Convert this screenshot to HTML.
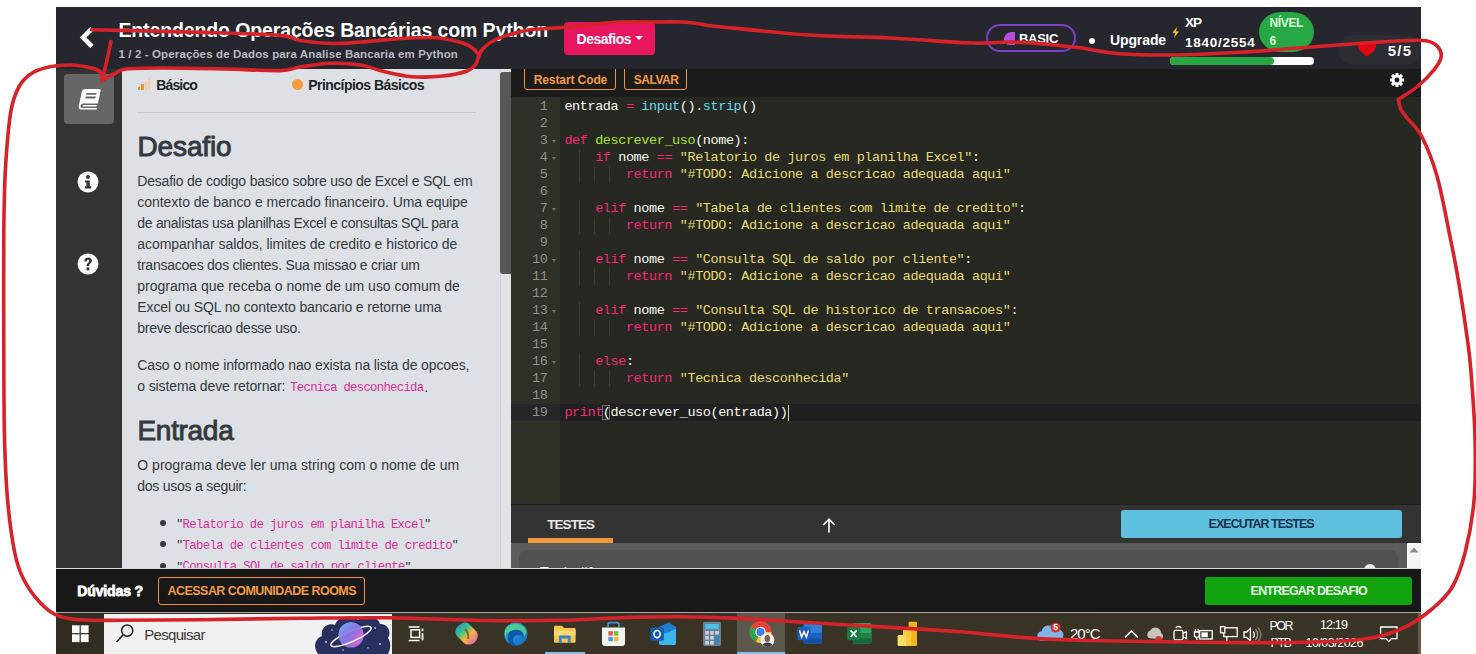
<!DOCTYPE html>
<html lang="pt-BR"><head><meta charset="utf-8"><title>Desafio</title>
<style>
html,body{margin:0;padding:0;background:#fff;}
body{width:1476px;height:654px;position:relative;overflow:hidden;font-family:"Liberation Sans",sans-serif;}
.a{position:absolute;}
.t{position:absolute;white-space:nowrap;margin:0;padding:0;}
.cl{position:absolute;left:564.4px;height:17px;line-height:17px;white-space:pre;font-family:"Liberation Mono",monospace;font-size:13.5px;letter-spacing:-0.412px;color:#f8f8f2;}
.ln{position:absolute;left:511px;width:36.4px;text-align:right;height:17px;line-height:17px;font-family:"Liberation Mono",monospace;font-size:13.5px;letter-spacing:-0.412px;color:#8f908a;}
.k{color:#f92672}.f{color:#66d9ef}.g{color:#a6e22e}.s{color:#e6db74}
</style></head><body>


<div class="a" style="left:56px;top:7px;width:1365px;height:62px;background:#26262e;"></div>
<div class="a" style="left:56px;top:69px;width:66px;height:499px;background:#333333;"></div>
<div class="a" style="left:64px;top:74px;width:50px;height:50px;border-radius:4px;background:#666666;"></div>
<div class="a" style="left:122px;top:69px;width:378px;height:499px;background:#dde0e4;"></div>
<div class="a" style="left:500px;top:69px;width:11px;height:499px;background:#e1e3e6;border-left:1px solid #d2d5d9;box-sizing:border-box;"></div>
<div class="a" style="left:500px;top:72px;width:11px;height:202px;background:#575757;border-radius:3px 0 0 3px;"></div>
<div class="a" style="left:137px;top:112px;width:339px;height:1px;background:#c6c9cd;"></div>
<div class="a" style="left:511px;top:69px;width:910px;height:28px;background:#1b1b1b;"></div>
<div class="a" style="left:511px;top:97px;width:910px;height:407px;background:#272822;"></div>
<div class="a" style="left:511px;top:97px;width:49px;height:407px;background:#2f3129;"></div>
<div class="a" style="left:511px;top:404px;width:910px;height:17px;background:#202020;"></div>
<div class="a" style="left:511px;top:404px;width:49px;height:17px;background:#272727;"></div>
<div class="a" style="left:511px;top:504px;width:910px;height:39px;background:#333333;border-top:1px solid #1f1f1d;box-sizing:border-box;"></div>
<div class="a" style="left:511px;top:543px;width:910px;height:25px;background:#5b5b5b;"></div>
<div class="a" style="left:519px;top:550px;width:879px;height:30px;background:#515151;border-radius:8px;"></div>
<div class="a" style="left:1407px;top:543px;width:14px;height:25px;background:#f4f4f4;"></div>
<div class="a" style="left:528px;top:538px;width:85px;height:5px;background:#f0983e;"></div>
<div class="a" style="left:1121px;top:510px;width:281px;height:28px;border-radius:3px;background:#60c0e0;"></div>
<div class="a" style="z-index:2;left:56px;top:568px;width:1365px;height:45px;background:#181818;border-top:1px solid #d8d8d8;box-sizing:border-box;"></div>
<div class="a" style="z-index:2;left:1205px;top:577px;width:207px;height:28px;border-radius:3px;background:#12a40f;"></div>
<div class="a" style="z-index:2;left:158px;top:577px;width:207px;height:28px;border-radius:3px;border:1px solid #f0913a;box-sizing:border-box;"></div>
<div class="a" style="z-index:2;left:56px;top:612px;width:1365px;height:42px;background:linear-gradient(90deg,#302c20 0,#393326 300px,#3a3427 100%);border-top:1px solid #a9a79f;box-sizing:border-box;"></div>
<div class="a" style="z-index:2;left:104px;top:614px;width:288px;height:40px;background:#f1f1f1;"></div>
<div class="a" style="z-index:2;left:737px;top:613px;width:48px;height:41px;background:#5c574b;"></div>
<div class="a" style="z-index:2;left:737px;top:652px;width:48px;height:2px;background:#84bdea;"></div>
<div class="a" style="z-index:2;left:545px;top:652px;width:40px;height:2px;background:#84bdea;"></div>
<div class="a" style="z-index:2;left:1418px;top:613px;width:3px;height:41px;background:#6a5a45;"></div>


<div class="a" style="left:564px;top:22px;width:91px;height:33px;border-radius:4px;background:#e8155f;"></div>
<div class="a" style="left:635px;top:36px;width:0;height:0;border-left:4.5px solid transparent;border-right:4.5px solid transparent;border-top:4.5px solid #fff;"></div>
<div class="a" style="left:985.5px;top:24px;width:90px;height:28px;border-radius:14px;border:2px solid #7d3fc4;box-sizing:border-box;"></div>
<div class="a" style="left:1004px;top:32px;width:11px;height:13px;background:#b44fe0;border-radius:11px 0 1px 8px;"></div>
<div class="a" style="left:1089px;top:38px;width:6px;height:6px;border-radius:3px;background:#fff;"></div>
<div class="a" style="left:1258.7px;top:11.5px;width:55.3px;height:40px;border-radius:22px/20px;background:#28a745;"></div>
<div class="a" style="left:1170px;top:57px;width:144px;height:8px;border-radius:4px;background:#fff;"></div>
<div class="a" style="left:1170px;top:57px;width:104px;height:8px;border-radius:4px;background:#28a745;"></div>
<div class="a" style="left:1338px;top:35px;width:83px;height:30px;border-radius:15px;background:#2c2c33;"></div>
<svg class="a" style="left:1354px;top:40px;" width="26" height="18" viewBox="0 0 26 18"><path d="M13 16.6 C9.4 13.6 3.8 10.2 3.8 5.8 C3.8 3 5.9 1.2 8.4 1.2 C10.4 1.2 12.2 2.3 13 3.9 C13.8 2.3 15.6 1.2 17.6 1.2 C20.1 1.2 22.2 3 22.2 5.8 C22.2 10.2 16.6 13.6 13 16.6 Z" fill="#e30613"/></svg>
<svg class="a" style="left:1170.5px;top:25.5px;" width="9.4" height="13" viewBox="0 0 13 18"><path d="M8.5 1 L2 9.5 L6 9.8 L4 16.5 L11 7.5 L7 7.2 Z" fill="#fbbf24"/></svg>
<svg class="a" style="left:76px;top:23px;" width="24" height="30" viewBox="0 0 24 30"><path d="M16 5.5 L7 14.5 L16 23.5" fill="none" stroke="#fff" stroke-width="4.6" stroke-linecap="butt" stroke-linejoin="miter"/></svg>


<svg class="a" style="left:76px;top:86px;" width="26" height="26" viewBox="0 0 26 26"><g transform="skewX(-12) translate(4,0)"><path d="M6 3 H20 a1.6 1.6 0 0 1 1.6 1.6 V17.5 H7 a2.2 2.2 0 0 0 0 4.4 H21.6 V23.5 H6.5 A3.6 3.6 0 0 1 3 19.9 V6 A3 3 0 0 1 6 3 Z" fill="#fff"/><rect x="8" y="7" width="10" height="1.8" fill="#666"/><rect x="8" y="10.6" width="10" height="1.8" fill="#666"/><rect x="7" y="19" width="14" height="1.6" fill="#fff"/></g></svg>
<svg class="a" style="left:77.4px;top:170.5px;" width="22" height="22" viewBox="0 0 21 21"><circle cx="10.5" cy="10.5" r="10" fill="#fff"/><circle cx="10.5" cy="5.8" r="1.9" fill="#333"/><path d="M7.6 9 H12.2 V14.6 H13.6 V16.6 H7.6 V14.6 H9 V11 H7.6 Z" fill="#333"/></svg>
<svg class="a" style="left:77.4px;top:252.6px;" width="22" height="22" viewBox="0 0 21 21"><circle cx="10.5" cy="10.5" r="10" fill="#fff"/><path d="M7 8 C7 5.5 8.6 4.4 10.6 4.4 C12.8 4.4 14.2 5.7 14.2 7.5 C14.2 9.8 11.6 10 11.6 12.3 H9.3 C9.3 9.4 11.7 9.2 11.7 7.6 C11.7 6.9 11.2 6.5 10.6 6.5 C9.8 6.5 9.4 7.1 9.4 8 Z" fill="#333"/><circle cx="10.45" cy="15.2" r="1.55" fill="#333"/></svg>


<div class="a" style="left:138.2px;top:86.5px;width:2.2px;height:3px;background:#f4922f;"></div>
<div class="a" style="left:141.4px;top:84px;width:2.2px;height:5.5px;background:#f4922f;"></div>
<div class="a" style="left:144.6px;top:81px;width:2.2px;height:8.5px;background:#f7cda3;"></div>
<div class="a" style="left:147.8px;top:78px;width:2.2px;height:11.5px;background:#f7cda3;"></div>
<div class="a" style="left:291.5px;top:78.5px;width:11px;height:11px;border-radius:6px;background:#fd9a3a;"></div>
<div class="a" style="left:159.6px;top:519.8px;width:6px;height:6px;border-radius:3px;background:#343a40;"></div>
<div class="a" style="left:159.6px;top:541.2px;width:6px;height:6px;border-radius:3px;background:#343a40;"></div>
<div class="a" style="left:159.6px;top:562.5px;width:6px;height:6px;border-radius:3px;background:#343a40;"></div>


<div class="a" style="left:524px;top:63.2px;width:92px;height:26.5px;border-radius:3px;border:1px solid #f0913a;box-sizing:border-box;"></div>
<div class="a" style="left:624px;top:63.2px;width:63px;height:26.5px;border-radius:3px;border:1px solid #f0913a;box-sizing:border-box;"></div>
<div class="a" style="left:511px;top:60px;width:200px;height:9px;background:#26262e;"></div>
<svg class="a" style="left:1389px;top:71.8px;" width="16" height="16" viewBox="0 0 16 16"><g fill="#fff"><circle cx="8" cy="8" r="5.4"/><rect x="6.5" y="0.9" width="3" height="14.2" rx="0.5"/><rect x="6.5" y="0.9" width="3" height="14.2" rx="0.5" transform="rotate(45 8 8)"/><rect x="6.5" y="0.9" width="3" height="14.2" rx="0.5" transform="rotate(90 8 8)"/><rect x="6.5" y="0.9" width="3" height="14.2" rx="0.5" transform="rotate(135 8 8)"/></g><circle cx="8" cy="8" r="2.4" fill="#1b1b1b"/></svg>
<svg class="a" style="left:821px;top:517px;" width="16" height="17" viewBox="0 0 16 17"><path d="M8 15.5 V2.5 M2.2 8 L8 2.2 L13.8 8" fill="none" stroke="#fff" stroke-width="1.6"/></svg>
<svg class="a" style="left:1409px;top:546px;" width="10" height="8" viewBox="0 0 10 8"><path d="M0.5 6.5 L5 1.5 L9.5 6.5 Z" fill="#8a8a8a"/></svg>
<div class="a" style="left:1364px;top:564px;width:12px;height:12px;border-radius:6px;background:#e8e8e8;"></div>

<div class="ln" style="top:98.3px">1</div>
<div class="cl" style="top:98.3px">entrada <span class="k">=</span> <span class="f">input</span>().<span class="f">strip</span>()</div>
<div class="ln" style="top:115.3px">2</div>
<div class="ln" style="top:132.3px">3</div>
<div class="a" style="left:551.5px;top:140.3px;width:0;height:0;border-left:2.6px solid transparent;border-right:2.6px solid transparent;border-top:3.4px solid #74756f;"></div>
<div class="cl" style="top:132.3px"><span class="k">def</span> <span class="g">descrever_uso</span>(nome):</div>
<div class="ln" style="top:149.3px">4</div>
<div class="a" style="left:551.5px;top:157.3px;width:0;height:0;border-left:2.6px solid transparent;border-right:2.6px solid transparent;border-top:3.4px solid #74756f;"></div>
<div class="cl" style="top:149.3px">    <span class="k">if</span> nome <span class="k">==</span> <span class="s">"Relatorio de juros em planilha Excel"</span>:</div>
<div class="ln" style="top:166.3px">5</div>
<div class="cl" style="top:166.3px">        <span class="k">return</span> <span class="s">"#TODO: Adicione a descricao adequada aqui"</span></div>
<div class="ln" style="top:183.3px">6</div>
<div class="ln" style="top:200.3px">7</div>
<div class="a" style="left:551.5px;top:208.3px;width:0;height:0;border-left:2.6px solid transparent;border-right:2.6px solid transparent;border-top:3.4px solid #74756f;"></div>
<div class="cl" style="top:200.3px">    <span class="k">elif</span> nome <span class="k">==</span> <span class="s">"Tabela de clientes com limite de credito"</span>:</div>
<div class="ln" style="top:217.3px">8</div>
<div class="cl" style="top:217.3px">        <span class="k">return</span> <span class="s">"#TODO: Adicione a descricao adequada aqui"</span></div>
<div class="ln" style="top:234.3px">9</div>
<div class="ln" style="top:251.3px">10</div>
<div class="a" style="left:551.5px;top:259.3px;width:0;height:0;border-left:2.6px solid transparent;border-right:2.6px solid transparent;border-top:3.4px solid #74756f;"></div>
<div class="cl" style="top:251.3px">    <span class="k">elif</span> nome <span class="k">==</span> <span class="s">"Consulta SQL de saldo por cliente"</span>:</div>
<div class="ln" style="top:268.3px">11</div>
<div class="cl" style="top:268.3px">        <span class="k">return</span> <span class="s">"#TODO: Adicione a descricao adequada aqui"</span></div>
<div class="ln" style="top:285.3px">12</div>
<div class="ln" style="top:302.3px">13</div>
<div class="a" style="left:551.5px;top:310.3px;width:0;height:0;border-left:2.6px solid transparent;border-right:2.6px solid transparent;border-top:3.4px solid #74756f;"></div>
<div class="cl" style="top:302.3px">    <span class="k">elif</span> nome <span class="k">==</span> <span class="s">"Consulta SQL de historico de transacoes"</span>:</div>
<div class="ln" style="top:319.3px">14</div>
<div class="cl" style="top:319.3px">        <span class="k">return</span> <span class="s">"#TODO: Adicione a descricao adequada aqui"</span></div>
<div class="ln" style="top:336.3px">15</div>
<div class="ln" style="top:353.3px">16</div>
<div class="a" style="left:551.5px;top:361.3px;width:0;height:0;border-left:2.6px solid transparent;border-right:2.6px solid transparent;border-top:3.4px solid #74756f;"></div>
<div class="cl" style="top:353.3px">    <span class="k">else</span>:</div>
<div class="ln" style="top:370.3px">17</div>
<div class="cl" style="top:370.3px">        <span class="k">return</span> <span class="s">"Tecnica desconhecida"</span></div>
<div class="ln" style="top:387.3px">18</div>
<div class="ln" style="top:404.3px">19</div>
<div class="cl" style="top:404.3px"><span class="k">print</span>(descrever_uso(entrada))</div>
<div class="a" style="left:578.6px;top:148.8px;width:1px;height:17px;background:#3b3a32;"></div>
<div class="a" style="left:578.6px;top:199.8px;width:1px;height:17px;background:#3b3a32;"></div>
<div class="a" style="left:578.6px;top:250.8px;width:1px;height:17px;background:#3b3a32;"></div>
<div class="a" style="left:578.6px;top:301.8px;width:1px;height:17px;background:#3b3a32;"></div>
<div class="a" style="left:578.6px;top:352.8px;width:1px;height:17px;background:#3b3a32;"></div>
<div class="a" style="left:578.6px;top:165.8px;width:1px;height:17px;background:#3b3a32;"></div>
<div class="a" style="left:594.0px;top:165.8px;width:1px;height:17px;background:#3b3a32;"></div>
<div class="a" style="left:609.4px;top:165.8px;width:1px;height:17px;background:#3b3a32;"></div>
<div class="a" style="left:578.6px;top:216.8px;width:1px;height:17px;background:#3b3a32;"></div>
<div class="a" style="left:594.0px;top:216.8px;width:1px;height:17px;background:#3b3a32;"></div>
<div class="a" style="left:609.4px;top:216.8px;width:1px;height:17px;background:#3b3a32;"></div>
<div class="a" style="left:578.6px;top:267.8px;width:1px;height:17px;background:#3b3a32;"></div>
<div class="a" style="left:594.0px;top:267.8px;width:1px;height:17px;background:#3b3a32;"></div>
<div class="a" style="left:609.4px;top:267.8px;width:1px;height:17px;background:#3b3a32;"></div>
<div class="a" style="left:578.6px;top:318.8px;width:1px;height:17px;background:#3b3a32;"></div>
<div class="a" style="left:594.0px;top:318.8px;width:1px;height:17px;background:#3b3a32;"></div>
<div class="a" style="left:609.4px;top:318.8px;width:1px;height:17px;background:#3b3a32;"></div>
<div class="a" style="left:578.6px;top:369.8px;width:1px;height:17px;background:#3b3a32;"></div>
<div class="a" style="left:594.0px;top:369.8px;width:1px;height:17px;background:#3b3a32;"></div>
<div class="a" style="left:609.4px;top:369.8px;width:1px;height:17px;background:#3b3a32;"></div>
<div class="a" style="left:787.5px;top:405px;width:1px;height:16px;background:#d0d0c8;"></div>
<div class="a" style="left:602px;top:405px;width:8px;height:15px;border:1px solid #6b6b63;box-sizing:border-box;"></div>
<div class="t" id="title" style="left:118.4px;top:16.8px;height:27px;line-height:27px;font-size:19.5px;font-weight:700;color:#fff;font-family:'Liberation Sans', sans-serif;letter-spacing:-0.121px;">Entendendo Operações Bancárias com Python</div>
<div class="t" id="sub" style="left:118.4px;top:46.0px;height:16px;line-height:16px;font-size:11.5px;font-weight:700;color:#b9b9c0;font-family:'Liberation Sans', sans-serif;letter-spacing:0.132px;">1 / 2 - Operações de Dados para Analise Bancaria em Python</div>
<div class="t" id="desaf" style="left:576.6px;top:29.0px;height:20px;line-height:20px;font-size:14px;font-weight:700;color:#fff;font-family:'Liberation Sans', sans-serif;letter-spacing:-0.495px;">Desafios</div>
<div class="t" id="basic" style="left:1019.0px;top:29.5px;height:18px;line-height:18px;font-size:13px;font-weight:700;color:#fff;font-family:'Liberation Sans', sans-serif;letter-spacing:-0.291px;">BASIC</div>
<div class="t" id="upg" style="left:1110.0px;top:29.5px;height:20px;line-height:20px;font-size:14px;font-weight:700;color:#fff;font-family:'Liberation Sans', sans-serif;letter-spacing:-0.114px;">Upgrade</div>
<div class="t" id="xp" style="left:1185.0px;top:12.8px;height:19px;line-height:19px;font-size:13.5px;font-weight:700;color:#fff;font-family:'Liberation Sans', sans-serif;letter-spacing:-1.008px;">XP</div>
<div class="t" id="xpv" style="left:1185.0px;top:33.3px;height:19px;line-height:19px;font-size:13.5px;font-weight:700;color:#fff;font-family:'Liberation Sans', sans-serif;letter-spacing:0.730px;">1840/2554</div>
<div class="t" id="nivel" style="left:1269.5px;top:14.5px;height:17px;line-height:17px;font-size:12px;font-weight:700;color:#d9ffd9;font-family:'Liberation Sans', sans-serif;letter-spacing:-0.369px;">NÍVEL</div>
<div class="t" id="n6" style="left:1269.5px;top:32.8px;height:17px;line-height:17px;font-size:12px;font-weight:700;color:#d9ffd9;font-family:'Liberation Sans', sans-serif;">6</div>
<div class="t" id="h55" style="left:1387.7px;top:39.5px;height:21px;line-height:21px;font-size:15px;font-weight:700;color:#fff;font-family:'Liberation Sans', sans-serif;letter-spacing:1.247px;">5/5</div>
<div class="t" id="basico" style="left:156.3px;top:75.0px;height:20px;line-height:20px;font-size:14px;font-weight:700;color:#212529;font-family:'Liberation Sans', sans-serif;letter-spacing:-0.870px;">Básico</div>
<div class="t" id="princ" style="left:308.2px;top:74.5px;height:20px;line-height:20px;font-size:14px;font-weight:700;color:#212529;font-family:'Liberation Sans', sans-serif;letter-spacing:-0.527px;">Princípios Básicos</div>
<div class="t" id="h1" style="left:137.5px;top:127.0px;height:39px;line-height:39px;font-size:28px;font-weight:400;color:#343a40;font-family:'Liberation Sans', sans-serif;-webkit-text-stroke:0.95px #343a40;letter-spacing:-0.134px;">Desafio</div>
<div class="t" id="p0" style="left:137.3px;top:171.0px;height:20px;line-height:20px;font-size:14px;font-weight:400;color:#343a40;font-family:'Liberation Sans', sans-serif;letter-spacing:-0.202px;">Desafio de codigo basico sobre uso de Excel e SQL em</div>
<div class="t" id="p1" style="left:137.3px;top:192.0px;height:20px;line-height:20px;font-size:14px;font-weight:400;color:#343a40;font-family:'Liberation Sans', sans-serif;letter-spacing:-0.037px;">contexto de banco e mercado financeiro. Uma equipe</div>
<div class="t" id="p2" style="left:137.3px;top:213.0px;height:20px;line-height:20px;font-size:14px;font-weight:400;color:#343a40;font-family:'Liberation Sans', sans-serif;letter-spacing:-0.294px;">de analistas usa planilhas Excel e consultas SQL para</div>
<div class="t" id="p3" style="left:137.3px;top:234.0px;height:20px;line-height:20px;font-size:14px;font-weight:400;color:#343a40;font-family:'Liberation Sans', sans-serif;letter-spacing:-0.042px;">acompanhar saldos, limites de credito e historico de</div>
<div class="t" id="p4" style="left:137.3px;top:255.0px;height:20px;line-height:20px;font-size:14px;font-weight:400;color:#343a40;font-family:'Liberation Sans', sans-serif;letter-spacing:-0.238px;">transacoes dos clientes. Sua missao e criar um</div>
<div class="t" id="p5" style="left:137.3px;top:276.0px;height:20px;line-height:20px;font-size:14px;font-weight:400;color:#343a40;font-family:'Liberation Sans', sans-serif;letter-spacing:-0.010px;">programa que receba o nome de um uso comum de</div>
<div class="t" id="p6" style="left:137.3px;top:297.0px;height:20px;line-height:20px;font-size:14px;font-weight:400;color:#343a40;font-family:'Liberation Sans', sans-serif;letter-spacing:-0.126px;">Excel ou SQL no contexto bancario e retorne uma</div>
<div class="t" id="p7" style="left:137.3px;top:318.0px;height:20px;line-height:20px;font-size:14px;font-weight:400;color:#343a40;font-family:'Liberation Sans', sans-serif;letter-spacing:-0.275px;">breve descricao desse uso.</div>
<div class="t" id="p8" style="left:137.3px;top:355.0px;height:20px;line-height:20px;font-size:14px;font-weight:400;color:#343a40;font-family:'Liberation Sans', sans-serif;letter-spacing:-0.109px;">Caso o nome informado nao exista na lista de opcoes,</div>
<div class="t" id="p9" style="left:137.3px;top:376.0px;height:20px;line-height:20px;font-size:14px;font-weight:400;color:#343a40;font-family:'Liberation Sans', sans-serif;letter-spacing:-0.124px;">o sistema deve retornar:</div>
<div class="t" id="p10" style="left:137.3px;top:455.0px;height:20px;line-height:20px;font-size:14px;font-weight:400;color:#343a40;font-family:'Liberation Sans', sans-serif;letter-spacing:0.011px;">O programa deve ler uma string com o nome de um</div>
<div class="t" id="p11" style="left:137.3px;top:476.0px;height:20px;line-height:20px;font-size:14px;font-weight:400;color:#343a40;font-family:'Liberation Sans', sans-serif;letter-spacing:-0.251px;">dos usos a seguir:</div>
<div class="t" id="h2" style="left:137.5px;top:410.5px;height:39px;line-height:39px;font-size:28px;font-weight:400;color:#343a40;font-family:'Liberation Sans', sans-serif;-webkit-text-stroke:0.95px #343a40;letter-spacing:-0.311px;">Entrada</div>
<div class="t" id="c0" style="left:290.2px;top:379.5px;height:17px;line-height:17px;font-size:12.25px;font-weight:400;color:#db2d9c;font-family:'Liberation Mono', monospace;letter-spacing:-0.692px;">Tecnica desconhecida</div>
<div class="t" id="c0d" style="left:424.2px;top:376.5px;height:20px;line-height:20px;font-size:14px;font-weight:400;color:#343a40;font-family:'Liberation Sans', sans-serif;">.</div>
<div class="t" id="bq0a" style="left:177.2px;top:513.9px;height:20px;line-height:20px;font-size:14px;font-weight:400;color:#343a40;font-family:'Liberation Sans', sans-serif;">"</div>
<div class="t" id="b0" style="left:182.6px;top:516.7px;height:17px;line-height:17px;font-size:12.25px;font-weight:400;color:#db2d9c;font-family:'Liberation Mono', monospace;letter-spacing:-0.632px;">Relatorio de juros em planilha Excel</div>
<div class="t" id="bq0b" style="left:425.3px;top:513.9px;height:20px;line-height:20px;font-size:14px;font-weight:400;color:#343a40;font-family:'Liberation Sans', sans-serif;">"</div>
<div class="t" id="bq1a" style="left:177.2px;top:535.3px;height:20px;line-height:20px;font-size:14px;font-weight:400;color:#343a40;font-family:'Liberation Sans', sans-serif;">"</div>
<div class="t" id="b1" style="left:182.6px;top:538.1px;height:17px;line-height:17px;font-size:12.25px;font-weight:400;color:#db2d9c;font-family:'Liberation Mono', monospace;letter-spacing:-0.619px;">Tabela de clientes com limite de credito</div>
<div class="t" id="bq1b" style="left:452.7px;top:535.3px;height:20px;line-height:20px;font-size:14px;font-weight:400;color:#343a40;font-family:'Liberation Sans', sans-serif;">"</div>
<div class="t" id="bq2a" style="left:177.2px;top:556.6px;height:20px;line-height:20px;font-size:14px;font-weight:400;color:#343a40;font-family:'Liberation Sans', sans-serif;">"</div>
<div class="t" id="b2" style="left:182.6px;top:559.4px;height:17px;line-height:17px;font-size:12.25px;font-weight:400;color:#db2d9c;font-family:'Liberation Mono', monospace;letter-spacing:-0.621px;">Consulta SQL de saldo por cliente</div>
<div class="t" id="bq2b" style="left:405.5px;top:556.6px;height:20px;line-height:20px;font-size:14px;font-weight:400;color:#343a40;font-family:'Liberation Sans', sans-serif;">"</div>
<div class="t" id="rc" style="left:533.7px;top:71.5px;height:17px;line-height:17px;font-size:12px;font-weight:700;color:#f39b42;font-family:'Liberation Sans', sans-serif;letter-spacing:-0.099px;">Restart Code</div>
<div class="t" id="sv" style="left:633.8px;top:71.5px;height:17px;line-height:17px;font-size:12px;font-weight:700;color:#f39b42;font-family:'Liberation Sans', sans-serif;letter-spacing:-0.477px;">SALVAR</div>
<div class="t" id="tst" style="left:547.3px;top:515.3px;height:19px;line-height:19px;font-size:13.5px;font-weight:700;color:#e6e6e6;font-family:'Liberation Sans', sans-serif;letter-spacing:-0.969px;">TESTES</div>
<div class="t" id="ext" style="left:1208.6px;top:515.2px;height:18px;line-height:18px;font-size:12.5px;font-weight:700;color:#17324d;font-family:'Liberation Sans', sans-serif;letter-spacing:-0.988px;">EXECUTAR TESTES</div>
<div class="t" id="ent" style="left:1250.6px;top:582.3px;height:18px;line-height:18px;font-size:12.5px;font-weight:700;color:#e9ffe9;font-family:'Liberation Sans', sans-serif;z-index:3;letter-spacing:-0.805px;">ENTREGAR DESAFIO</div>
<div class="t" id="duv" style="left:77.3px;top:581.0px;height:20px;line-height:20px;font-size:14px;font-weight:700;color:#fff;font-family:'Liberation Sans', sans-serif;-webkit-text-stroke:0.8px #fff;z-index:3;letter-spacing:-0.134px;">Dúvidas ?</div>
<div class="t" id="acr" style="left:167.5px;top:582.3px;height:18px;line-height:18px;font-size:12.5px;font-weight:700;color:#f39b42;font-family:'Liberation Sans', sans-serif;z-index:3;letter-spacing:-0.538px;">ACESSAR COMUNIDADE ROOMS</div>
<div class="t" id="tst1" style="left:540.0px;top:562.4px;height:20px;line-height:20px;font-size:14px;font-weight:700;color:#f0f0f0;font-family:'Liberation Sans', sans-serif;">Teste #1</div>
<div class="t" id="pesq" style="left:144.3px;top:623.8px;height:21px;line-height:21px;font-size:15px;font-weight:400;color:#3a3a3a;font-family:'Liberation Sans', sans-serif;z-index:3;letter-spacing:-0.700px;">Pesquisar</div>
<div class="t" id="temp" style="left:1070.0px;top:623.3px;height:21px;line-height:21px;font-size:15px;font-weight:400;color:#fff;font-family:'Liberation Sans', sans-serif;z-index:3;letter-spacing:-1.004px;">20°C</div>
<div class="t" id="por" style="left:1269.5px;top:616.5px;height:18px;line-height:18px;font-size:12.5px;font-weight:400;color:#fff;font-family:'Liberation Sans', sans-serif;z-index:3;letter-spacing:-1.531px;">POR</div>
<div class="t" id="ptb" style="left:1270.5px;top:633.8px;height:18px;line-height:18px;font-size:12.5px;font-weight:400;color:#fff;font-family:'Liberation Sans', sans-serif;z-index:3;letter-spacing:-1.438px;">PTB</div>
<div class="t" id="clk" style="left:1320.0px;top:615.6px;height:18px;line-height:18px;font-size:12.5px;font-weight:400;color:#fff;font-family:'Liberation Sans', sans-serif;z-index:3;letter-spacing:-0.856px;">12:19</div>
<div class="t" id="dat" style="left:1305.5px;top:633.8px;height:18px;line-height:18px;font-size:12.5px;font-weight:400;color:#fff;font-family:'Liberation Sans', sans-serif;z-index:3;letter-spacing:-0.506px;">10/03/2026</div>
<!-- taskbar icons -->
<svg class="a" style="left:56px;top:613px;z-index:3;" width="1365" height="41" viewBox="56 613 1365 41">
<defs>
<linearGradient id="gpl" x1="0" y1="0" x2="1" y2="1"><stop offset="0" stop-color="#6fb6f5"/><stop offset="0.55" stop-color="#8a6fe0"/><stop offset="1" stop-color="#e86bd0"/></linearGradient>
<linearGradient id="gco" x1="0" y1="0" x2="1" y2="1"><stop offset="0" stop-color="#2f7fe8"/><stop offset="0.35" stop-color="#35c28a"/><stop offset="0.6" stop-color="#f5b63c"/><stop offset="1" stop-color="#d84fd0"/></linearGradient>
<linearGradient id="ged" x1="0" y1="0" x2="1" y2="1"><stop offset="0" stop-color="#2bc3a0"/><stop offset="0.5" stop-color="#1f8fd8"/><stop offset="1" stop-color="#1565b8"/></linearGradient>
</defs>
<!-- windows logo -->
<g fill="#fff"><rect x="72" y="625.3" width="7.6" height="7.8"/><rect x="80.8" y="625.3" width="7.8" height="7.8"/><rect x="72" y="634.3" width="7.6" height="7.8"/><rect x="80.8" y="634.3" width="7.8" height="7.8"/></g>
<!-- search icon -->
<circle cx="127.2" cy="630.6" r="5.6" fill="none" stroke="#222" stroke-width="1.5"/><path d="M123.2 634.8 L116.6 642" stroke="#222" stroke-width="1.6" fill="none"/>
<!-- planet -->
<path d="M318 654 C312 646 316 638 322 636 C320 628 328 622 335 625 C338 616 352 614 358 620 C364 614 378 616 380 624 C388 624 392 632 388 638 C392 644 390 650 388 654 Z" fill="#27305f"/>
<circle cx="351" cy="635" r="12.6" fill="url(#gpl)"/>
<ellipse cx="351" cy="636.5" rx="22" ry="5.2" fill="none" stroke="#f3eefc" stroke-width="1.6" transform="rotate(-24 351 636.5)"/>
<path d="M339 631 A12.6 12.6 0 0 1 363 631 L363 636 L339 640 Z" fill="url(#gpl)" opacity="0.9"/>
<g fill="#cfd6f5"><circle cx="326" cy="642" r="0.9"/><circle cx="332" cy="630" r="0.8"/><circle cx="375" cy="628" r="0.9"/><circle cx="380" cy="644" r="0.9"/><circle cx="368" cy="648" r="0.8"/><circle cx="343" cy="650" r="0.8"/></g>
<!-- task view -->
<g fill="none" stroke="#fff" stroke-width="1.5"><rect x="411" y="629.8" width="8.6" height="7.6"/><path d="M408.6 627 H419.5 M408.6 640.4 H419.5"/></g><rect x="421.6" y="628.6" width="1.8" height="2.6" fill="#fff"/><rect x="421.6" y="633" width="1.8" height="7.4" fill="#fff"/>
<!-- copilot -->
<path d="M461 624 C463 622 467 622 469 624 L476 631 C479 634 478 640 474 643 C471 645 466 645 464 643 L457 636 C454 633 455 627 461 624 Z" fill="url(#gco)"/>
<path d="M465 629 C467 631 469 635 468 639" stroke="#3a3226" stroke-width="2" fill="none" opacity="0.55"/>
<!-- edge -->
<circle cx="515.8" cy="634" r="11.6" fill="url(#ged)"/>
<path d="M508 640 C506 633 512 628 518 629 C523 630 525 634 523 637 C520 634 514 634 513 639 C512.6 643 516 646 520 645 C514 647 509 645 508 640 Z" fill="#0f58a8"/>
<path d="M505 630 C509 623 520 622 525 628 C527 631 527 634 524 636 C524 631 517 628 511 631 C508 632 506 634 505 637 Z" fill="#4fd08f" opacity="0.9"/>
<!-- explorer -->
<path d="M554 627 a1.2 1.2 0 0 1 1.2 -1.2 H562 l2 2.2 H574.4 a1.2 1.2 0 0 1 1.2 1.2 V641.5 a1.2 1.2 0 0 1 -1.2 1.2 H555.2 a1.2 1.2 0 0 1 -1.2 -1.2 Z" fill="#f5c84a"/>
<rect x="554" y="630.5" width="21.6" height="5" fill="#fbe08a" opacity="0.7"/>
<path d="M559 642.7 V636.5 a1 1 0 0 1 1 -1 H569.6 a1 1 0 0 1 1 1 V642.7 H567.8 V638.4 H561.8 V642.7 Z" fill="#3b83c9"/>
<!-- store -->
<path d="M608 627 V624.6 a2 2 0 0 1 2 -2 H617 a2 2 0 0 1 2 2 V627" fill="none" stroke="#3f93d6" stroke-width="1.8"/>
<path d="M602 627.4 H625 V643 a3 3 0 0 1 -3 3 H605 a3 3 0 0 1 -3 -3 Z" fill="#f3f3f3"/>
<rect x="608.4" y="631.2" width="4.4" height="4.4" fill="#f0553f"/><rect x="614" y="631.2" width="4.4" height="4.4" fill="#7cbb3f"/><rect x="608.4" y="636.8" width="4.4" height="4.4" fill="#3f9fe0"/><rect x="614" y="636.8" width="4.4" height="4.4" fill="#f7b82f"/>
<!-- outlook -->
<path d="M659 627 L668.5 622.6 L676 627 V643 a2 2 0 0 1 -2 2 H661 a2 2 0 0 1 -2 -2 Z" fill="#1f7bd4"/>
<path d="M659 636 L676 629 V643 a2 2 0 0 1 -2 2 H661 a2 2 0 0 1 -2 -2 Z" fill="#3cb4ee"/>
<rect x="650.4" y="627.4" width="13.4" height="13.4" rx="1.6" fill="#0f5fb6"/>
<ellipse cx="657.1" cy="634.1" rx="3.1" ry="3.6" fill="none" stroke="#fff" stroke-width="1.7"/>
<!-- calculator -->
<rect x="703" y="621.8" width="18" height="24.2" rx="1.8" fill="#6e7f92"/>
<rect x="705.2" y="624" width="13.6" height="5" fill="#49c0e8"/>
<g fill="#c9d2dc"><rect x="705.2" y="631" width="3.6" height="3.6"/><rect x="710.2" y="631" width="3.6" height="3.6"/><rect x="715.2" y="631" width="3.6" height="3.6"/><rect x="705.2" y="636" width="3.6" height="3.6"/><rect x="710.2" y="636" width="3.6" height="3.6"/><rect x="705.2" y="641" width="3.6" height="3.6"/><rect x="710.2" y="641" width="3.6" height="3.6"/></g>
<rect x="715.2" y="636" width="3.6" height="8.6" fill="#2f87d0"/>
<!-- chrome -->
<circle cx="760.5" cy="632" r="11" fill="#e4433a"/>
<path d="M760.5 632 L751 626.5 A11 11 0 0 0 756 642 Z" fill="#2fa350"/>
<path d="M760.5 632 L756 642 A11 11 0 0 0 771.5 632 Z" fill="#f7c22f"/>
<circle cx="760.5" cy="632" r="5.2" fill="#fff"/><circle cx="760.5" cy="632" r="4.1" fill="#3f7fe6"/>
<circle cx="767.4" cy="640" r="7" fill="#f1f1f1"/>
<ellipse cx="767.4" cy="638.6" rx="2.8" ry="3.5" fill="#8a5f45"/>
<path d="M762.6 645 C763 641.6 771.8 641.6 772.2 645 A7 7 0 0 1 762.6 645 Z" fill="#39404d"/>
<!-- word -->
<rect x="803.5" y="623" width="18.5" height="20.6" rx="1.6" fill="#2f7fd8"/>
<rect x="803.5" y="633" width="18.5" height="5.4" fill="#1f62bd"/><rect x="803.5" y="638.2" width="18.5" height="5.4" rx="1.6" fill="#164fa3"/>
<rect x="797.4" y="627" width="13.2" height="13.2" rx="1.4" fill="#1b5cbe"/>
<path d="M799.6 630.4 L801.6 637 L804 631.6 L806.4 637 L808.4 630.4" fill="none" stroke="#fff" stroke-width="1.5"/>
<!-- excel -->
<rect x="853" y="623" width="18.5" height="20.6" rx="1.6" fill="#2fa060"/>
<rect x="853" y="633" width="18.5" height="5.4" fill="#1f8049"/><rect x="853" y="638.2" width="18.5" height="5.4" rx="1.6" fill="#17693b"/>
<rect x="847" y="627" width="13.2" height="13.2" rx="1.4" fill="#167a41"/>
<path d="M850.6 630.4 L856.6 637 M856.6 630.4 L850.6 637" fill="none" stroke="#fff" stroke-width="1.7"/>
<!-- power bi -->
<rect x="908.6" y="621.8" width="8.4" height="24.2" rx="1.2" fill="#f0b51f"/>
<rect x="903" y="628.6" width="8.4" height="17.4" rx="1.2" fill="#f5c93c"/>
<rect x="897.6" y="635" width="8.4" height="11" rx="1.2" fill="#f9dc6a"/>
<!-- weather -->
<path d="M1041 641 a5 5 0 0 1 0.6 -9.8 a7.2 7.2 0 0 1 13.6 -1.6 a5.8 5.8 0 0 1 4.4 11.4 Z" fill="#7fb5ea"/>
<circle cx="1055.6" cy="627.6" r="5" fill="#d9332b"/>
<!-- chevron up -->
<path d="M1125 637.4 L1131.4 631 L1137.8 637.4" fill="none" stroke="#fff" stroke-width="1.5"/>
<!-- tray: onedrive-ish -->
<path d="M1148.6 638 a4.6 4.6 0 0 1 1.6 -7.6 a6 6 0 0 1 11 2.6 a3.6 3.6 0 0 1 -0.6 6.6 Z" fill="#c9c4bb"/>
<circle cx="1158.6" cy="639.2" r="3.2" fill="#d9332b"/>
<!-- meet now -->
<g fill="none" stroke="#fff" stroke-width="1.3"><rect x="1174" y="630.4" width="9" height="9.4" rx="1.6"/><path d="M1183 633.4 L1186.4 631.6 V638.6 L1183 636.8"/><path d="M1175.6 628 C1177 626 1180 626 1181.4 628"/></g>
<!-- battery/plug -->
<g fill="none" stroke="#fff" stroke-width="1.3"><rect x="1199.6" y="630.6" width="12.6" height="8.4"/><path d="M1195.4 629 V632 M1198.2 629 V632 M1194.4 632 H1199.2 V635 a2.2 2.2 0 0 1 -4.8 0 Z M1196.8 637.4 V640"/></g><rect x="1201.4" y="632.4" width="6.4" height="4.8" fill="#fff"/>
<!-- network -->
<g fill="none" stroke="#fff" stroke-width="1.3"><rect x="1223.8" y="627.8" width="13.4" height="8.8"/><path d="M1222 641.6 H1231.6 M1226.8 636.6 V641.6"/><rect x="1220.6" y="626.6" width="4.2" height="6.2" fill="#393326"/></g>
<!-- speaker -->
<g fill="none" stroke="#fff" stroke-width="1.3"><path d="M1244 632 H1246.6 L1250.4 628.4 V641 L1246.6 637.4 H1244 Z"/><path d="M1253 631.6 a4.2 4.2 0 0 1 0 6.2" /><path d="M1255.4 629.4 a7.4 7.4 0 0 1 0 10.6" opacity="0.55"/><path d="M1257.8 627.4 a10.4 10.4 0 0 1 0 14.6" opacity="0.35"/></g>
<!-- notification -->
<path d="M1380.6 627 H1397 V638.6 H1391.4 L1388.8 641.6 L1386.2 638.6 H1380.6 Z" fill="none" stroke="#fff" stroke-width="1.3"/>
</svg>
<div class="t" style="left:1053.3px;top:622px;height:11px;line-height:11px;font-size:8.5px;font-weight:700;color:#fff;z-index:4;">5</div>

<svg class="a" style="left:0;top:0;z-index:9;" width="1476" height="654" viewBox="0 0 1476 654">
<path d="M102.7 80.0 C102.2 78.6 101.5 73.5 99.6 71.5 C97.7 69.5 96.3 69.1 91.5 68.0 C86.7 66.9 77.8 65.2 71.0 65.0 C64.2 64.8 57.3 65.2 51.0 66.5 C44.7 67.8 38.3 69.2 33.0 72.5 C27.7 75.8 23.1 79.5 19.4 86.0 C15.7 92.5 13.1 98.1 10.8 111.7 C8.5 125.3 6.7 147.8 5.5 167.8 C4.3 187.9 4.1 203.0 3.8 232.0 C3.5 261.0 3.7 307.7 3.8 342.0 C3.9 376.3 3.8 411.1 4.5 437.8 C5.2 464.5 6.0 483.0 7.8 502.4 C9.6 521.8 12.3 541.1 15.0 554.0 C17.7 566.9 19.8 571.9 24.0 580.0 C28.2 588.1 34.5 596.6 40.0 602.5 C45.5 608.4 50.2 612.4 57.0 615.3 C63.8 618.2 70.2 619.0 81.0 619.8 C91.8 620.6 102.2 620.3 122.0 620.3 C141.8 620.3 170.3 620.0 200.0 619.7 C229.7 619.4 268.3 618.6 300.0 618.3 C331.7 618.0 358.7 617.4 390.0 617.8 C421.3 618.2 459.7 620.1 488.0 620.5 C516.3 620.9 538.0 620.8 560.0 620.3 C582.0 619.8 600.0 618.4 620.0 617.8 C640.0 617.2 660.0 616.7 680.0 616.8 C700.0 616.9 720.8 617.6 740.0 618.4 C759.2 619.2 770.0 620.2 795.0 621.7 C820.0 623.2 862.5 625.7 890.0 627.4 C917.5 629.1 937.7 630.1 960.0 631.8 C982.3 633.5 1002.5 636.1 1023.7 637.6 C1044.9 639.1 1060.5 639.8 1087.0 640.5 C1113.5 641.2 1151.2 641.6 1183.0 642.0 C1214.8 642.4 1251.5 642.8 1278.0 642.6 C1304.5 642.4 1326.0 641.8 1342.0 641.0 C1358.0 640.2 1363.3 640.0 1374.0 637.6 C1384.7 635.2 1396.3 631.4 1406.0 626.6 C1415.7 621.8 1424.3 615.5 1432.0 609.0 C1439.7 602.5 1446.5 596.8 1452.0 587.5 C1457.5 578.2 1461.3 567.4 1465.0 553.0 C1468.7 538.6 1472.3 520.4 1474.0 501.0 C1475.7 481.6 1475.5 458.2 1475.0 436.7 C1474.5 415.2 1472.2 388.1 1471.0 372.0 C1469.8 355.9 1469.5 354.7 1467.5 340.0 C1465.5 325.3 1461.9 301.2 1459.0 284.0 C1456.1 266.8 1453.7 254.5 1450.0 236.5 C1446.3 218.5 1441.7 192.6 1437.0 176.0 C1432.3 159.4 1426.8 146.5 1422.0 137.0 C1417.2 127.5 1411.6 123.7 1408.0 119.0 C1404.4 114.3 1402.2 112.2 1400.6 109.0 C1399.0 105.8 1398.8 101.1 1398.5 99.5" fill="none" stroke="#d62228" stroke-width="3.6" stroke-linecap="round" stroke-linejoin="round"/>
<path d="M1398.5 99.5 C1401.8 97.2 1412.1 91.0 1418.0 86.0 C1423.9 81.0 1430.2 74.5 1434.0 69.8 C1437.8 65.1 1440.3 61.5 1441.0 57.7 C1441.7 53.9 1440.5 49.8 1438.0 47.0 C1435.5 44.2 1432.0 41.8 1426.0 40.8 C1420.0 39.8 1415.0 40.2 1402.0 40.8 C1389.0 41.4 1365.9 43.0 1348.0 44.3 C1330.1 45.5 1312.4 47.0 1294.6 48.3 C1276.8 49.6 1261.1 51.2 1241.0 52.3 C1220.9 53.4 1194.2 54.8 1174.0 55.0 C1153.8 55.2 1135.7 54.9 1120.0 53.7 C1104.3 52.5 1091.3 49.3 1080.0 47.8 C1068.7 46.3 1063.3 45.7 1052.0 44.7 C1040.7 43.7 1025.5 42.3 1012.0 42.0 C998.5 41.7 991.3 43.7 971.0 43.0 C950.7 42.3 917.2 39.3 890.0 38.0 C862.8 36.7 836.3 36.9 808.0 35.0 C779.7 33.1 738.0 28.5 720.0 26.7 C702.0 24.9 706.2 24.8 700.0 24.0 C693.8 23.2 690.0 22.3 682.6 22.0 C675.2 21.7 666.8 21.9 655.5 22.0 C644.2 22.1 630.1 21.4 615.0 22.3 C599.9 23.2 578.2 26.2 564.7 27.4 C551.2 28.6 542.5 28.3 534.0 29.3 C525.5 30.3 520.4 31.7 514.0 33.4 C507.6 35.1 500.8 37.0 495.6 39.5 C490.4 42.0 485.9 45.6 483.0 48.6 C480.1 51.6 479.2 55.2 478.0 57.8 C476.8 60.4 477.8 61.8 476.0 64.0 C474.2 66.2 472.5 69.0 467.0 71.0 C461.5 73.0 452.2 75.0 443.0 76.0 C433.8 77.0 422.2 77.5 412.0 76.7 C401.8 75.9 390.5 73.0 382.0 71.0 C373.5 69.0 369.5 66.3 361.0 65.0 C352.5 63.7 341.2 63.0 331.0 63.3 C320.8 63.6 308.5 65.8 300.0 67.0 C291.5 68.2 292.7 70.3 280.0 70.6 C267.3 70.9 243.5 69.4 224.0 69.0 C204.5 68.6 179.3 68.0 163.0 68.0 C146.7 68.0 134.2 68.0 126.0 69.0 C117.8 70.0 117.9 72.2 114.0 74.0 C110.1 75.8 104.6 79.0 102.7 80.0" fill="none" stroke="#d62228" stroke-width="3.6" stroke-linecap="round" stroke-linejoin="round"/>
<path d="M91.5 29.8 C110.1 30.2 171.6 31.5 203.0 32.4 C234.4 33.3 263.8 34.0 280.0 35.4 C296.2 36.8 291.5 39.1 300.0 40.5 C308.5 41.9 320.8 43.2 331.0 43.5 C341.2 43.8 349.2 42.8 361.0 42.0 C372.8 41.2 390.1 39.2 402.0 38.5 C413.9 37.8 424.0 37.2 432.5 37.5 C441.0 37.8 446.9 39.1 453.0 40.5 C459.1 41.9 464.8 43.4 469.0 45.6 C473.2 47.8 476.5 51.5 478.0 53.7 C479.5 55.9 478.0 58.1 478.0 59.0" fill="none" stroke="#d62228" stroke-width="3.6" stroke-linecap="round" stroke-linejoin="round"/>
<path d="M111.0 41.5 C110.3 44.6 108.5 53.4 107.0 60.0 C105.5 66.6 102.6 77.5 101.7 81.0" fill="none" stroke="#d62228" stroke-width="3.6" stroke-linecap="round" stroke-linejoin="round"/>
</svg>

</body></html>
